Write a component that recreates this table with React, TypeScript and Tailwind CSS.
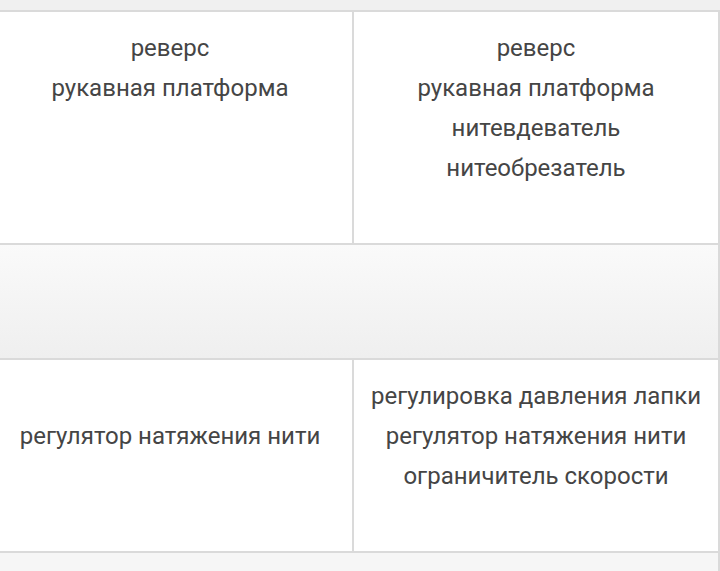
const rows = {
  top: [
    ["реверс", "рукавная платформа"],
    ["реверс", "рукавная платформа", "нитевдеватель", "нитеобрезатель"],
  ],
  bottom: [
    ["регулятор натяжения нити"],
    ["регулировка давления лапки", "регулятор натяжения нити", "ограничитель скорости"],
  ],
};

function Lines({ items }: { items: string[] }) {
  return (
    <>
      {items.map((t) => (
        <div key={t} className="whitespace-nowrap">
          {t}
        </div>
      ))}
    </>
  );
}

export default function App() {
  return (
    <div
      className="w-[720px] h-[571px] overflow-hidden bg-[#f0f0f0] text-[#454545] text-[24px] leading-[40px]"
      style={{ fontFamily: "Roboto, 'Noto Sans', sans-serif" }}
    >
      <div className="h-[10px] bg-[#f0f0f0]" />
      {/* table starts a little off the left edge */}
      <div className="w-[734px] -ml-[14px] border-t-2 border-x-2 border-[#dadada]">
        {/* first row */}
        <div className="flex h-[231px] items-start bg-white">
          <div className="w-[366px] h-full border-r-2 border-[#dadada] pt-4 text-center">
            <Lines items={rows.top[0]} />
          </div>
          <div className="flex-1 h-full pt-4 text-center">
            <Lines items={rows.top[1]} />
          </div>
        </div>

        {/* empty separator row */}
        <div className="h-[115px] border-t-2 border-[#dadada] bg-gradient-to-b from-[#fafafa] to-[#efefef]" />

        {/* second row */}
        <div className="flex h-[193px] border-t-2 border-[#dadada] bg-white">
          <div className="w-[366px] border-r-2 border-[#dadada] flex flex-col justify-center pb-[40px] text-center">
            <Lines items={rows.bottom[0]} />
          </div>
          <div className="flex-1 flex flex-col justify-center pb-[40px] text-center">
            <Lines items={rows.bottom[1]} />
          </div>
        </div>

        <div className="h-[20px] border-t-2 border-[#dadada] bg-[#f6f6f6]" />
      </div>
    </div>
  );
}
